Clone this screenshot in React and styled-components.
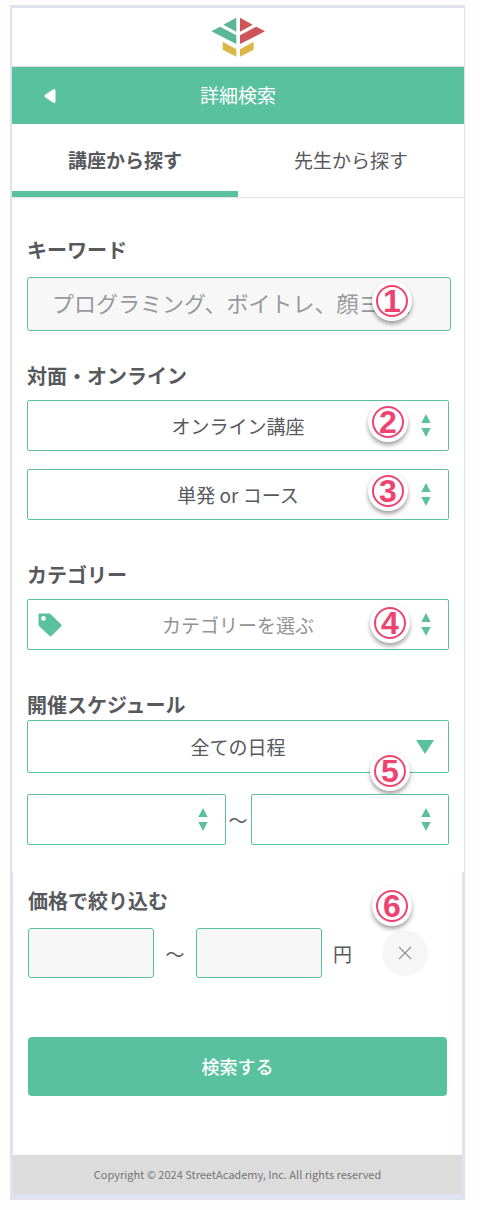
import React from "react";
import styled, { createGlobalStyle } from "styled-components";

const green = "#5ac19f";
const frameEdge = "#dfe3ef";

const GlobalStyle = createGlobalStyle`
  *, *::before, *::after { box-sizing: border-box; }
  body {
    margin: 0;
    background: #fefefe;
    color: #58595d;
    font-family: "Noto Sans CJK JP", sans-serif;
    font-size: 19px;
  }
  button, input, select { font: inherit; color: inherit; margin: 0; }
`;

const Page = styled.div`
  padding: 5px 15px 10px 10px;
`;

const UpperPanel = styled.div`
  background: #fff;
  border: solid ${frameEdge};
  border-width: 3px 1px 0 2px;
`;

const LowerPanel = styled.div`
  background: #fff;
  border: solid ${frameEdge};
  border-width: 0 3px 6px;
`;

const LogoBar = styled.header`
  display: flex;
  align-items: center;
  justify-content: center;
  height: 59px;
  border-bottom: 1px solid #dcdfe0;
`;

const TitleBar = styled.div`
  display: grid;
  grid-template-columns: 76px 1fr 76px;
  align-items: center;
  height: 57px;
  background: ${green};
  color: #fff;
`;

const BackButton = styled.button`
  display: flex;
  align-items: center;
  justify-content: center;
  height: 57px;
  padding: 0;
  border: 0;
  background: none;
`;

const Title = styled.h1`
  margin: 0;
  padding-bottom: 2px;
  font-size: 19px;
  font-weight: 400;
  line-height: 30px;
  text-align: center;
`;

const Tabs = styled.nav`
  display: flex;
  border-bottom: 1px solid #e3e4e8;
`;

const Tab = styled.button`
  flex: 1;
  height: 73px;
  padding: 0 0 2px;
  border: 0;
  background: none;
  font-weight: ${(p) => (p.$active ? 700 : 400)};
  box-shadow: ${(p) => (p.$active ? `inset 0 -6px ${green}` : "none")};
`;

const UpperFields = styled.div`
  padding: 37px 15px 27px;
`;

const LowerFields = styled.div`
  padding: 14px 15px 59px;
`;

const Section = styled.section`
  margin-bottom: ${(p) => p.$after || 0}px;
`;

const Heading = styled.h2`
  margin: 0 0 ${(p) => p.$gap}px;
  font-size: 20px;
  font-weight: 700;
  line-height: 30px;
`;

const Stack = styled.div`
  display: flex;
  flex-direction: column;
  gap: ${(p) => p.$gap}px;
`;

const Control = styled.div`
  position: relative;
  flex: 1;
`;

const WideControl = styled(Control)`
  margin-right: -2px;
`;

const TextInput = styled.input`
  display: block;
  width: 100%;
  height: ${(p) => p.$height}px;
  padding: 0 24px 4px;
  border: 1px solid ${green};
  border-radius: 3px;
  background: #f7f7f7;
  font-size: 22px;
  outline: 0;
  &::placeholder { color: #98999d; opacity: 1; }
`;

const Select = styled.select`
  display: block;
  width: 100%;
  height: ${(p) => p.$height || 51}px;
  padding: 0 40px;
  border: 1px solid ${green};
  border-radius: 2px;
  background: #fff;
  color: ${(p) => (p.$muted ? "#929292" : "inherit")};
  text-align: center;
  text-align-last: center;
  appearance: none;
  outline: 0;
`;

const ControlIcon = styled.span`
  position: absolute;
  top: 0;
  bottom: 0;
  ${(p) => p.$side || "right"}: ${(p) => p.$inset}px;
  display: flex;
  align-items: center;
  pointer-events: none;
`;

const Badge = styled.span`
  position: absolute;
  top: ${(p) => p.$top}px;
  right: ${(p) => p.$right}px;
  display: flex;
  width: 40px;
  height: 40px;
  padding: 4px;
  border-radius: 50%;
  background: #fff;
  box-shadow: 0 3px 4px rgba(0, 0, 0, 0.36);
  pointer-events: none;
`;

const BadgeRing = styled.span`
  flex: 1;
  border: 2px solid #ee4370;
  border-radius: 50%;
  color: #ee4370;
  font-family: "Liberation Sans", sans-serif;
  font-size: 32px;
  font-weight: 700;
  line-height: 28px;
  text-align: center;
`;

const DateRange = styled.div`
  display: flex;
  align-items: center;
`;

const Tilde = styled.span`
  width: ${(p) => p.$width}px;
  display: flex;
  justify-content: center;
`;

const PriceSection = styled(Section)`
  position: relative;
`;

const PriceRow = styled.div`
  display: flex;
  align-items: center;
  padding-right: 19px;
`;

const Yen = styled.span`
  width: 60px;
  padding-left: 11px;
`;

const ClearButton = styled.button`
  display: flex;
  align-items: center;
  justify-content: center;
  width: 46px;
  height: 46px;
  padding: 0;
  border: 0;
  border-radius: 50%;
  background: #f6f6f6;
`;

const SubmitButton = styled.button`
  display: block;
  width: 100%;
  height: 59px;
  padding: 0 0 2px;
  border: 0;
  border-radius: 4px;
  background: ${green};
  color: #fff;
  font-size: 18px;
  font-weight: 500;
`;

const Footer = styled.footer`
  background: #dcdcdc;
  color: #757575;
  font-size: 11px;
  line-height: 39px;
  text-align: center;
`;

const Logo = () => (
  <svg width="54" height="40" viewBox="633 49 162 120" role="img" aria-label="StreetAcademy">
    <g fill="#5ab796">
      <path d="M670 72L709 51V93Z" />
      <path d="M634 92L660 78L709 104V130Z" />
    </g>
    <g fill="#cf5459">
      <path d="M758 72L720 51V93Z" />
      <path d="M795 92L769 78L720 104V130Z" />
    </g>
    <g fill="#dbb748">
      <path d="M668 123L709 146V168L668 147Z" />
      <path d="M761 123L720 146V168L761 147Z" />
    </g>
  </svg>
);

const BackIcon = () => (
  <svg width="12" height="16" viewBox="0 0 12 16" aria-hidden="true">
    <path d="M2 8L10 2.5V13.5Z" fill="#fff" stroke="#fff" strokeWidth="3" strokeLinejoin="round" />
  </svg>
);

const UpDownIcon = () => (
  <svg width="10" height="23" viewBox="0 0 10 23" fill={green} aria-hidden="true">
    <path d="M5 0L9.7 9H.3Z" />
    <path d="M5 23L9.7 14H.3Z" />
  </svg>
);

const DownIcon = () => (
  <svg width="18" height="14" viewBox="0 0 18 14" fill={green} aria-hidden="true">
    <path d="M0 0H18L9 14Z" />
  </svg>
);

const TagIcon = () => (
  <svg width="24" height="24" viewBox="0 0 24 24" fill={green} aria-hidden="true">
    <path
      fillRule="evenodd"
      d="M1 .5H11Q12 .5 12.7 1.2L23.2 11.6Q24 12.5 23.2 13.3L13.4 23Q12.5 23.8 11.7 23L1.2 13.2Q.5 12.4 .5 11.5V1Q.5 .5 1 .5ZM5.5 3A2.4 2.4 0 1 0 5.5 7.8A2.4 2.4 0 1 0 5.5 3Z"
    />
  </svg>
);

const CloseIcon = () => (
  <svg width="14" height="14" viewBox="0 0 14 14" aria-hidden="true">
    <path d="M1 1L13 13M13 1L1 13" stroke="#929292" strokeWidth="1.2" />
  </svg>
);

const StepBadge = ({ number, top, right }) => (
  <Badge $top={top} $right={right}>
    <BadgeRing>{number}</BadgeRing>
  </Badge>
);

const SelectField = ({ label, option, height, muted, icon, iconInset = 18, children }) => (
  <Control>
    <Select aria-label={label} $height={height} $muted={muted}>
      <option>{option}</option>
    </Select>
    <ControlIcon $inset={iconInset}>{icon || <UpDownIcon />}</ControlIcon>
    {children}
  </Control>
);

export default function App() {
  return (
    <Page>
      <GlobalStyle />
      <UpperPanel>
        <LogoBar>
          <Logo />
        </LogoBar>
        <TitleBar>
          <BackButton type="button" aria-label="戻る">
            <BackIcon />
          </BackButton>
          <Title>詳細検索</Title>
        </TitleBar>
        <Tabs>
          <Tab type="button" $active>講座から探す</Tab>
          <Tab type="button">先生から探す</Tab>
        </Tabs>
        <UpperFields>
          <Section $after={30}>
            <Heading $gap={12}>
              <label htmlFor="keyword">キーワード</label>
            </Heading>
            <WideControl>
              <TextInput id="keyword" $height={54} placeholder="プログラミング、ボイトレ、顔ヨガ、" />
              <StepBadge number={1} top={4} right={39} />
            </WideControl>
          </Section>

          <Section $after={40}>
            <Heading $gap={9}>対面・オンライン</Heading>
            <Stack $gap={18}>
              <SelectField label="対面・オンライン" option="オンライン講座">
                <StepBadge number={2} top={2} right={41} />
              </SelectField>
              <SelectField label="単発 or コース" option="単発 or コース">
                <StepBadge number={3} top={2} right={41} />
              </SelectField>
            </Stack>
          </Section>

          <Section $after={40}>
            <Heading $gap={9}>カテゴリー</Heading>
            <SelectField label="カテゴリー" option="カテゴリーを選ぶ" muted>
              <ControlIcon $side="left" $inset={11}>
                <TagIcon />
              </ControlIcon>
              <StepBadge number={4} top={4} right={39} />
            </SelectField>
          </Section>

          <Section>
            <Heading $gap={0}>開催スケジュール</Heading>
            <Stack $gap={21}>
              <SelectField
                label="開催スケジュール"
                option="全ての日程"
                height={53}
                icon={<DownIcon />}
                iconInset={15}
              >
                <StepBadge number={5} top={31} right={39} />
              </SelectField>
              <DateRange>
                <SelectField label="開始日" option="" />
                <Tilde $width={25}>〜</Tilde>
                <SelectField label="終了日" option="" />
              </DateRange>
            </Stack>
          </Section>
        </UpperFields>
      </UpperPanel>

      <LowerPanel>
        <LowerFields>
          <PriceSection $after={59}>
            <Heading $gap={12}>価格で絞り込む</Heading>
            <PriceRow>
              <Control>
                <TextInput aria-label="最低価格" $height={50} />
              </Control>
              <Tilde $width={42}>〜</Tilde>
              <Control>
                <TextInput aria-label="最高価格" $height={50} />
              </Control>
              <Yen>円</Yen>
              <ClearButton type="button" aria-label="クリア">
                <CloseIcon />
              </ClearButton>
            </PriceRow>
            <StepBadge number={6} top={0} right={35} />
          </PriceSection>
          <SubmitButton type="submit">検索する</SubmitButton>
        </LowerFields>
        <Footer>Copyright © 2024 StreetAcademy, Inc. All rights reserved</Footer>
      </LowerPanel>
    </Page>
  );
}
